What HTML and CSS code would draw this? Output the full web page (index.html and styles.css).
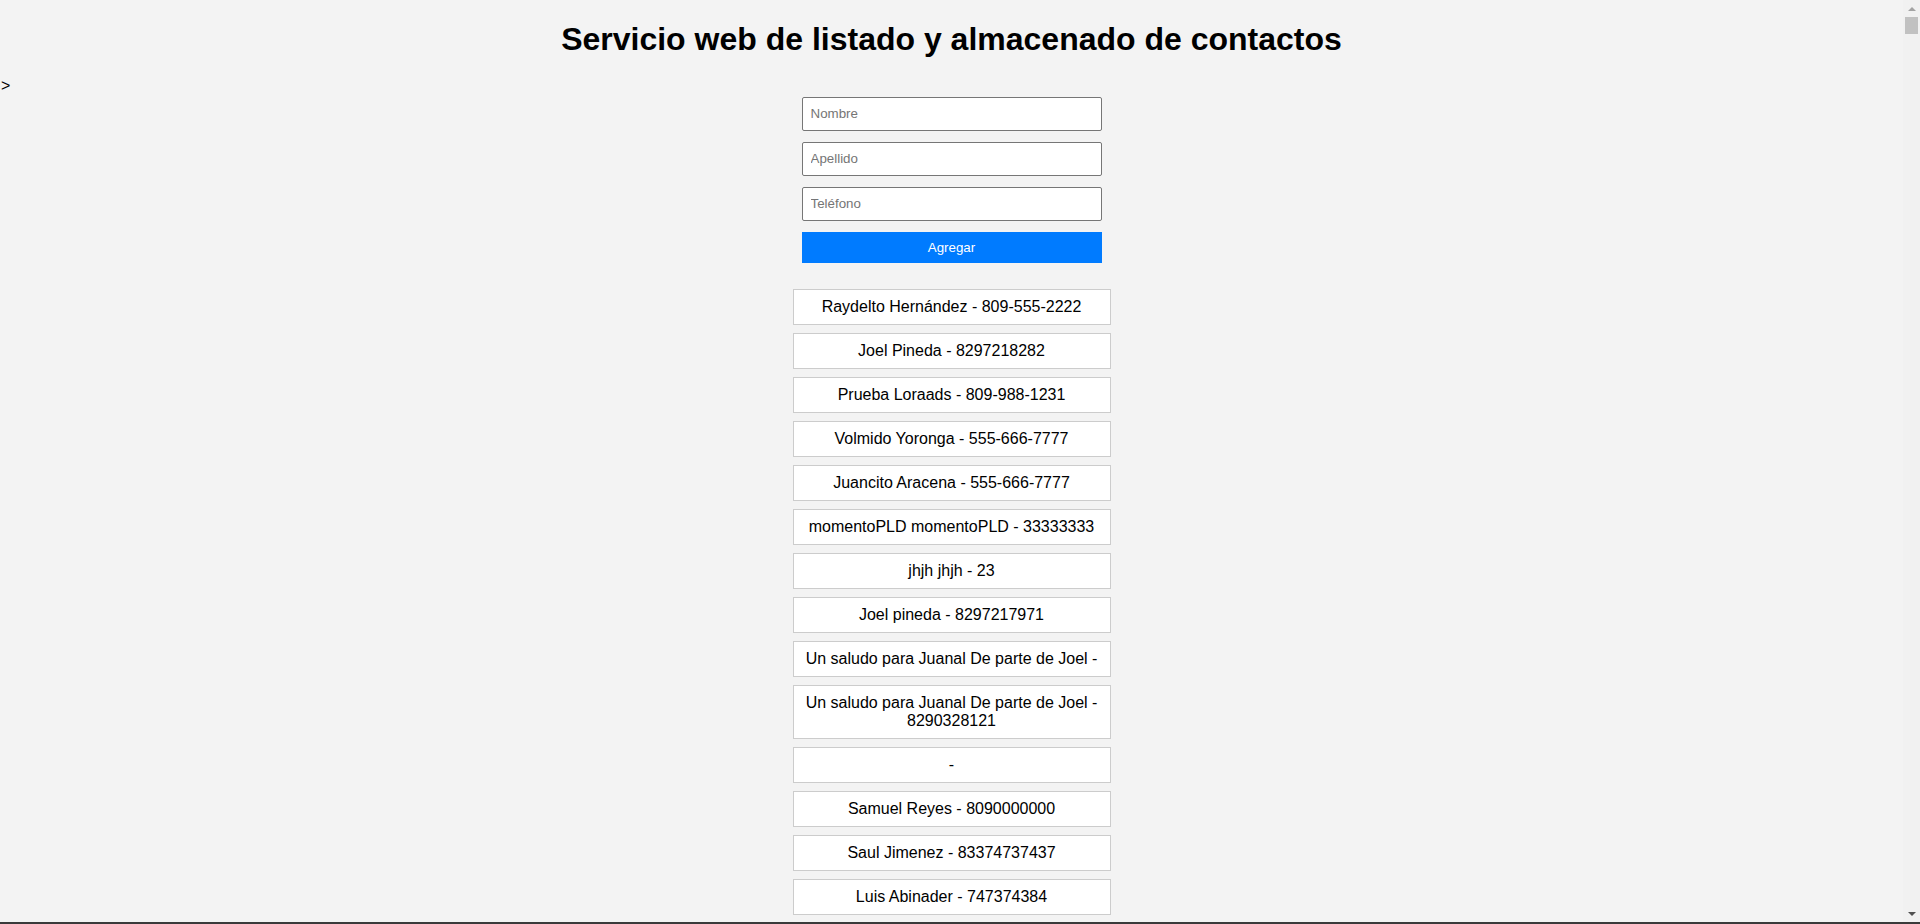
FILE: index.html
```html
<!DOCTYPE html>
<html lang="es">
<head>
<meta charset="utf-8">
<title>Contactos</title>
<link rel="stylesheet" href="styles.css">
</head>
<body>
<div class="page">
  <h1 class="title">Servicio web de listado y almacenado de contactos</h1>
  <div class="stray">&gt;</div>
  <form class="form">
    <input class="field" type="text" placeholder="Nombre">
    <input class="field" type="text" placeholder="Apellido">
    <input class="field" type="text" placeholder="Teléfono">
    <button class="btn" type="button">Agregar</button>
  </form>
  <ul class="list">
    <li class="item">Raydelto Hernández - 809-555-2222</li>
    <li class="item">Joel Pineda - 8297218282</li>
    <li class="item">Prueba Loraads - 809-988-1231</li>
    <li class="item">Volmido Yoronga - 555-666-7777</li>
    <li class="item">Juancito Aracena - 555-666-7777</li>
    <li class="item">momentoPLD momentoPLD - 33333333</li>
    <li class="item">jhjh jhjh - 23</li>
    <li class="item">Joel pineda - 8297217971</li>
    <li class="item">Un saludo para Juanal De parte de Joel - </li>
    <li class="item">Un saludo para Juanal De parte de Joel - 8290328121</li>
    <li class="item"> - </li>
    <li class="item">Samuel Reyes - 8090000000</li>
    <li class="item">Saul Jimenez - 83374737437</li>
    <li class="item">Luis Abinader - 747374384</li>
  </ul>
</div>
<div class="scrollbar">
  <div class="arrow arrow-up"></div>
  <div class="thumb"></div>
  <div class="track"></div>
  <div class="arrow arrow-down"></div>
</div>
<div class="edge"></div>
</body>
</html>
```
FILE: styles.css
```css
html, body {
  margin: 0;
  padding: 0;
}
body {
  background: #f3f3f3;
  font-family: "Liberation Sans", Arial, sans-serif;
  color: #000;
  font-size: 16px;
}
.page {
  margin-right: 17px;
  padding-top: 21.44px;
}
.title {
  font-size: 32px;
  font-weight: bold;
  text-align: center;
  margin: 0 0 18.8px;
  line-height: normal;
}
.stray {
  font-size: 16px;
  line-height: 18.4px;
  padding-left: 1px;
}
.form {
  width: 300px;
  margin: 1px auto 0;
  display: flex;
  flex-direction: column;
  gap: 11px;
}
.field {
  box-sizing: border-box;
  width: 300px;
  height: 34px;
  margin: 0;
  padding: 0 8px;
  border: 1px solid #767676;
  border-radius: 2px;
  background: #fff;
  font-family: "Liberation Sans", Arial, sans-serif;
  font-size: 13.33px;
  color: #000;
}
.field::placeholder {
  color: #757575;
}
.btn {
  box-sizing: border-box;
  width: 300px;
  height: 31px;
  margin: 0;
  border: none;
  border-radius: 0;
  background: #007bff;
  color: #fff;
  font-family: "Liberation Sans", Arial, sans-serif;
  font-size: 13.33px;
}
.list {
  list-style: none;
  width: 318px;
  margin: 26px auto 300px;
  padding: 0;
  display: flex;
  flex-direction: column;
  gap: 8px;
}
.item {
  box-sizing: border-box;
  background: #fff;
  border: 1px solid #ccc;
  padding: 8px;
  text-align: center;
  line-height: 18px;
}
.scrollbar {
  position: fixed;
  top: 0;
  right: 0;
  bottom: 0;
  width: 17px;
  background: #f1f1f1;
  display: flex;
  flex-direction: column;
  align-items: center;
}
.arrow {
  width: 0;
  height: 0;
  border-left: 4px solid transparent;
  border-right: 4px solid transparent;
  flex: none;
}
.arrow-up {
  margin-top: 7px;
  border-bottom: 4px solid #a3a3a3;
}
.thumb {
  flex: none;
  width: 13px;
  height: 17px;
  margin-top: 6px;
  background: #c1c1c1;
}
.track {
  flex: 1;
}
.arrow-down {
  margin-bottom: 8px;
  border-top: 4px solid #505050;
}
.edge {
  position: fixed;
  left: 0;
  right: 0;
  bottom: 0;
  height: 2px;
  background: #3a3a3a;
}
```
